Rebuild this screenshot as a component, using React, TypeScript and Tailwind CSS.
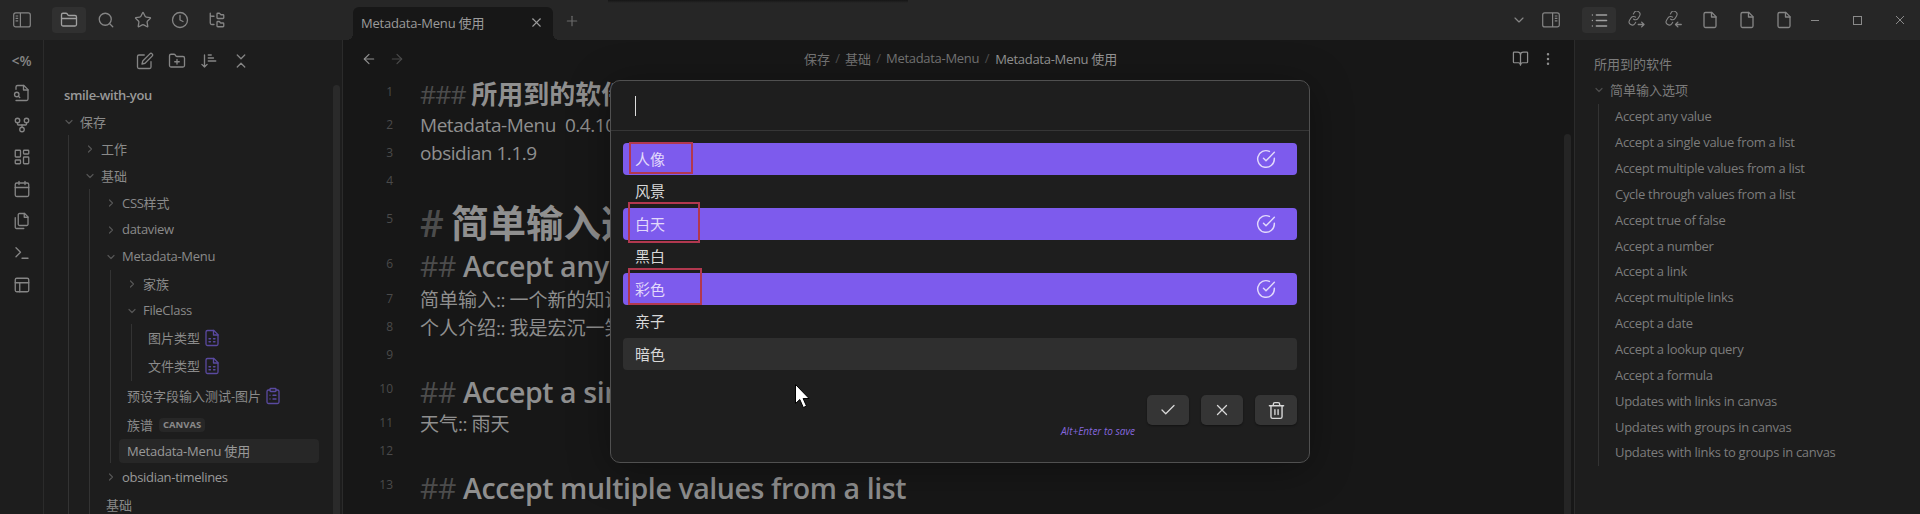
import React from "react";
import {
  ArrowLeft, ArrowRight, BookOpen, Calendar, Check, ChevronDown, ChevronRight, Clock, LayoutDashboard,
  List, MoreVertical, Plus, Search, Star, X, GitFork, Terminal,
} from "lucide-react";

type IconProps = { size?: number; className?: string; sw?: number; children?: React.ReactNode };

function Svg({ size = 18, className = "", sw = 1.75, children }: IconProps) {
  return (
    <svg width={size} height={size} viewBox="0 0 24 24" fill="none" stroke="currentColor" strokeWidth={sw}
      strokeLinecap="round" strokeLinejoin="round" className={"shrink-0 " + className}>
      {children}
    </svg>
  );
}

const FilePath = () => (
  <>
    <path d="M14.5 2H6a2 2 0 0 0-2 2v16a2 2 0 0 0 2 2h12a2 2 0 0 0 2-2V7.5L14.5 2z" />
    <path d="M14 2v6h6" />
  </>
);
const FileIcon = (p: IconProps) => <Svg {...p}><FilePath /></Svg>;
const FileTable = (p: IconProps) => (
  <Svg {...p}><FilePath /><path d="M8 13h2M8 17h2M14 13h2M14 17h2" /></Svg>
);
const ClipboardIcon = (p: IconProps) => (
  <Svg {...p}>
    <path d="M16 4h2a2 2 0 0 1 2 2v14a2 2 0 0 1-2 2H6a2 2 0 0 1-2-2V6a2 2 0 0 1 2-2h2" />
    <rect x="8" y="2" width="8" height="4" rx="1" />
    <path d="M12 11h4M12 16h4M8 11h.01M8 16h.01" />
  </Svg>
);
const FileSearchIcon = (p: IconProps) => (
  <Svg {...p}>
    <path d="M4 22h14a2 2 0 0 0 2-2V7.5L14.5 2H6a2 2 0 0 0-2 2v3" />
    <path d="M14 2v6h6" />
    <path d="M5 17a3 3 0 1 0 0-6 3 3 0 0 0 0 6zM9 18l-1.5-1.5" />
  </Svg>
);
const FilesIcon = (p: IconProps) => (
  <Svg {...p}>
    <path d="M15.5 2H8.6c-.4 0-.8.2-1.1.5-.3.3-.5.7-.5 1.1v12.8c0 .4.2.8.5 1.1.3.3.7.5 1.1.5h9.8c.4 0 .8-.2 1.1-.5.3-.3.5-.7.5-1.1V6.5L15.5 2z" />
    <path d="M3 7.6v12.8c0 .4.2.8.5 1.1.3.3.7.5 1.1.5h9.8" />
    <path d="M15 2v5h5" />
  </Svg>
);
const LayoutIcon = (p: IconProps) => (
  <Svg {...p}><rect x="3" y="3" width="18" height="18" rx="2" /><path d="M3 9h18M9 21V9" /></Svg>
);
const FolderIcon = (p: IconProps) => (
  <Svg {...p}>
    <path d="M4 20h16a2 2 0 0 0 2-2V8a2 2 0 0 0-2-2h-7.93a2 2 0 0 1-1.66-.9l-.82-1.2A2 2 0 0 0 7.93 3H4a2 2 0 0 0-2 2v13c0 1.1.9 2 2 2zM2 10h20" />
  </Svg>
);
const FolderPlusIcon = (p: IconProps) => (
  <Svg {...p}>
    <path d="M4 20h16a2 2 0 0 0 2-2V8a2 2 0 0 0-2-2h-7.93a2 2 0 0 1-1.66-.9l-.82-1.2A2 2 0 0 0 7.93 3H4a2 2 0 0 0-2 2v13c0 1.1.9 2 2 2zM12 10v6M9 13h6" />
  </Svg>
);
const FolderTreeIcon = (p: IconProps) => (
  <Svg {...p}>
    <path d="M13 10h7a1 1 0 0 0 1-1V6a1 1 0 0 0-1-1h-2.5a1 1 0 0 1-.8-.4l-.9-1.2A1 1 0 0 0 15 3h-2a1 1 0 0 0-1 1v5a1 1 0 0 0 1 1ZM13 21h7a1 1 0 0 0 1-1v-3a1 1 0 0 0-1-1h-2.88a1 1 0 0 1-.9-.55l-.44-.9a1 1 0 0 0-.9-.55H13a1 1 0 0 0-1 1v5a1 1 0 0 0 1 1ZM3 3v2c0 1.1.9 2 2 2h3M3 3v13c0 1.1.9 2 2 2h3" />
  </Svg>
);
const EditIcon = (p: IconProps) => (
  <Svg {...p}>
    <path d="M11 4H4a2 2 0 0 0-2 2v14a2 2 0 0 0 2 2h14a2 2 0 0 0 2-2v-7" />
    <path d="M18.5 2.5a2.12 2.12 0 0 1 3 3L12 15l-4 1 1-4Z" />
  </Svg>
);
const SortIcon = (p: IconProps) => (
  <Svg {...p}><path d="M2.5 16.5 6 20l3.5-3.5M6 20V4M11 4h4M11 8h7M11 12h10" /></Svg>
);
const CollapseIcon = (p: IconProps) => (
  <Svg {...p}><path d="m7 20 5-5 5 5M7 4l5 5 5-5" /></Svg>
);
const CheckCircle = (p: IconProps) => (
  <Svg {...p}><path d="M22 11.08V12a10 10 0 1 1-5.93-9.14M22 4 12 14.01l-3-3" /></Svg>
);
const TrashIcon = (p: IconProps) => (
  <Svg {...p}>
    <path d="M3 6h18M19 6v14a2 2 0 0 1-2 2H7a2 2 0 0 1-2-2V6M8 6V4a2 2 0 0 1 2-2h4a2 2 0 0 1 2 2v2M10 11v6M14 11v6" />
  </Svg>
);
const ChainPath = () => (
  <g transform="translate(0 -.6) scale(.84) rotate(-14 12 12)">
    <path d="M10 13a5 5 0 0 0 7.54.54l3-3a5 5 0 0 0-7.07-7.07l-1.72 1.71" />
    <path d="M14 11a5 5 0 0 0-7.54-.54l-3 3a5 5 0 0 0 7.07 7.07l1.71-1.71" />
  </g>
);
const LinkOut = (p: IconProps) => <Svg {...p}><ChainPath /><path d="M15 18h7.5M19.5 14.8l3.2 3.2-3.2 3.2" /></Svg>;
const LinkIn = (p: IconProps) => <Svg {...p}><ChainPath /><path d="M15.5 18H23M18.5 14.8 15.3 18l3.2 3.2" /></Svg>;

function PanelIcon({ right = false }: { right?: boolean }) {
  return (
    <svg width="18" height="16" viewBox="0 0 18 16" fill="none" stroke="currentColor" strokeWidth="1.2"
      className={right ? "-scale-x-100" : ""}>
      <rect x=".7" y=".9" width="16.6" height="14" rx="2" />
      <path d="M7.4 1v14M2.6 4h2.6M2.6 6.4h2.6M2.6 8.8h2.6" />
    </svg>
  );
}

const cjk = "font-['Noto_Sans_CJK_SC',sans-serif]";

/* Splits mixed text so that Latin runs keep their own tracking. */
function Mixed({ text, track = "tracking-[-0.3px]" }: { text: string; track?: string }) {
  return (
    <>
      {text.split(/([\u3000-\u9fff]+)/).filter(Boolean).map((part, i) =>
        /[\u3000-\u9fff]/.test(part)
          ? <span key={i} className={cjk}>{part}</span>
          : <span key={i} className={track}>{part}</span>
      )}
    </>
  );
}

function FolderRow({ name, open = false, root = false, className = "h-[27px]" }: { name: string; open?: boolean; root?: boolean; className?: string }) {
  const Icon = open ? ChevronDown : ChevronRight;
  return (
    <div className={"flex shrink-0 items-center gap-[5px] whitespace-pre " + (root ? "pl-[19px] " : "pl-[15px] ") + className}>
      <Icon size={12} strokeWidth={2.4} className="shrink-0 text-[#555]" />
      <span><Mixed text={name} /></span>
    </div>
  );
}

function FileRow({ name, className = "h-[30px]", children }: { name: string; className?: string; children?: React.ReactNode }) {
  return (
    <div className={"flex items-center gap-[3px] whitespace-pre pl-4 " + className}>
      <span><Mixed text={name} /></span>
      {children}
    </div>
  );
}

const guide = "ml-5 border-l border-[#333]";

function Explorer() {
  return (
    <aside className="flex w-[299px] shrink-0 border-r border-[#2b2b2b] bg-[#1d1d1d] text-[13px] text-[#8a8a8a]">
      <div className="flex min-w-0 flex-1 flex-col">
        <div className="flex h-[42px] shrink-0 items-center gap-[14px] pl-[92px] text-[#858585]">
          <EditIcon /><FolderPlusIcon /><SortIcon /><CollapseIcon />
        </div>
        <div className="flex h-[26px] shrink-0 items-center pl-5 font-semibold tracking-[-0.33px] text-[#999]">smile-with-you</div>
        <FolderRow name="保存" open root />
        <div className="ml-6 shrink-0 border-l border-[#333]">
          <FolderRow name="工作" />
          <FolderRow name="基础" open />
          <div className={guide}>
            <FolderRow name="CSS样式" />
            <FolderRow name="dataview" />
            <FolderRow name="Metadata-Menu" open />
            <div className={guide}>
              <FolderRow name="家族" />
              <FolderRow name="FileClass" open />
              <div className={guide}>
                <FileRow name="图片类型" className="h-[27px]"><FileTable className="text-[#5a4aa0]" /></FileRow>
                <FileRow name="文件类型"><FileTable className="text-[#5a4aa0]" /></FileRow>
              </div>
              <FileRow name="预设字段输入测试-图片"><ClipboardIcon className="text-[#5a4aa0]" /></FileRow>
              <FileRow name="族谱" className="h-7">
                <span className="ml-[3px] flex h-[14px] items-center rounded bg-[#272727] px-1 text-[9.5px] font-bold">CANVAS</span>
              </FileRow>
              <div className="ml-2 flex h-6 w-[200px] items-center rounded bg-[#272727] pl-2 whitespace-pre text-[#999]">
                <span><Mixed text="Metadata-Menu 使用" track="tracking-[-0.22px]" /></span>
              </div>
            </div>
            <FolderRow name="obsidian-timelines" className="h-7 text-[#999]" />
            <FileRow name="基础" className="h-[27px]" />
          </div>
        </div>
      </div>
      <div className="mt-[45px] mr-[2px] w-[7px] shrink-0 rounded-t bg-[#2a2a2a]" />
    </aside>
  );
}

function Ribbon() {
  return (
    <nav className="flex w-11 shrink-0 flex-col items-center gap-[14px] border-r border-[#2b2b2b] bg-[#1d1d1d] pt-3 text-[#858585]">
      <span className="flex h-[18px] items-center text-[14px] font-semibold">&lt;%</span>
      <FileSearchIcon />
      <GitFork size={18} strokeWidth={1.75} />
      <LayoutDashboard size={18} strokeWidth={1.75} />
      <Calendar size={18} strokeWidth={1.75} />
      <FilesIcon />
      <Terminal size={18} strokeWidth={1.75} />
      <LayoutIcon />
    </nav>
  );
}

function TitleBar() {
  return (
    <header className="flex h-10 shrink-0 items-center bg-[#262626] text-[#858585]">
      <div className="flex w-[343px] shrink-0 items-center pl-[13px]">
        <PanelIcon />
        <div className="ml-[21px] flex h-[26px] w-[34px] items-center justify-center rounded bg-[#303030] text-[#a0a0a0]">
          <FolderIcon />
        </div>
        <div className="ml-[11px] flex items-center gap-[19px]">
          <Search size={18} strokeWidth={1.75} />
          <Star size={18} strokeWidth={1.75} />
          <Clock size={18} strokeWidth={1.75} />
          <FolderTreeIcon />
        </div>
      </div>
      <div className="flex h-10 flex-1 items-end pl-[10px]">
        <div className="relative flex h-[33px] w-[200px] items-center rounded-t-md bg-[#171717] pr-[9px] pb-[2px] pl-[8px] text-[13px] text-[#9b9b9b]">
          <i className="absolute bottom-0 -left-[6px] size-[6px] bg-[radial-gradient(circle_at_0_0,transparent_6px,#171717_6px)]" />
          <i className="absolute -right-[6px] bottom-0 size-[6px] bg-[radial-gradient(circle_at_100%_0,transparent_6px,#171717_6px)]" />
          <span className="flex-1 whitespace-pre"><Mixed text="Metadata-Menu 使用" track="tracking-[-0.2px]" /></span>
          <X size={15} strokeWidth={1.75} />
        </div>
        <Plus size={16} strokeWidth={1.75} className="mb-[11px] ml-[11px] text-[#6b6b6b]" />
      </div>
      <ChevronDown size={16} strokeWidth={1.75} />
      <div className="ml-[15px]"><PanelIcon right /></div>
      <div className="ml-[22px] flex h-[26px] w-[34px] items-center justify-center rounded bg-[#303030] text-[#a0a0a0]">
        <List size={19} strokeWidth={1.75} />
      </div>
      <div className="ml-[11px] flex items-center gap-[19px]">
        <LinkOut /><LinkIn /><FileIcon /><FileIcon /><FileIcon />
      </div>
      <div className="mr-[15px] ml-[18px] flex items-center text-[#8a8a8a]">
        <div className="h-px w-2 bg-[#8a8a8a]" />
        <div className="ml-[34px] size-[9px] border border-[#8a8a8a]" />
        <svg width="10" height="10" viewBox="0 0 10 10" stroke="currentColor" className="ml-[33px]"><path d="M1 1l8 8M9 1L1 9" /></svg>
      </div>
    </header>
  );
}

type LineProps = { n: number; h: string; numPad?: string; children?: React.ReactNode };
function Line({ n, h, numPad = "", children }: LineProps) {
  return (
    <div className={"flex shrink-0 items-center " + h}>
      <span className={"w-[50px] shrink-0 text-right text-[12px] text-[#4a4a4a] " + numPad}>{n}</span>
      <div className="ml-[27px] whitespace-pre">{children}</div>
    </div>
  );
}

const h2 = "text-[28.5px] font-semibold tracking-[-0.41px]";
const hash = "text-[#4c4c4c]";

function Editor() {
  const body = "tracking-[-0.45px]";
  return (
    <main className="flex min-w-0 flex-1 bg-[#171717] text-[#8f8f8f]">
      <div className="flex min-w-0 flex-1 flex-col">
        <div className="flex h-[37px] shrink-0 items-center text-[13px]">
          <div className="flex w-[461px] items-center gap-3 pl-[18px]">
            <ArrowLeft size={16} strokeWidth={1.75} />
            <ArrowRight size={16} strokeWidth={1.75} className="text-[#4a4a4a]" />
          </div>
          <div className="flex items-center whitespace-pre text-[#747474]">
            <span className={cjk}>保存</span><span className="w-[15px] text-center text-[#505050]">/</span>
            <span className={cjk}>基础</span><span className="w-[15px] text-center text-[#505050]">/</span>
            <span className="tracking-[-0.3px]">Metadata-Menu</span><span className="w-4 text-center text-[#505050]">/</span>
            <span className="text-[#949494]"><Mixed text="Metadata-Menu 使用" /></span>
          </div>
          <div className="ml-auto flex items-center gap-[11px] pr-[8px]">
            <BookOpen size={17} strokeWidth={1.75} />
            <MoreVertical size={16} strokeWidth={1.75} />
          </div>
        </div>
        <div className="flex flex-col text-[19px]">
          <Line n={1} h="h-[34px]" numPad="pb-1">
            <div className="pb-[2px]">
              <span className={"text-[25px] tracking-[-0.9px] " + hash}>### </span>
              <span className={"text-[26px] font-bold " + cjk}>所用到的软件</span>
            </div>
          </Line>
          <Line n={2} h="h-7"><span className={body}>Metadata-Menu  0.4.10</span></Line>
          <Line n={3} h="h-7"><span className={body}>obsidian 1.1.9</span></Line>
          <Line n={4} h="h-7" />
          <Line n={5} h="h-[53px]" numPad="pb-[6px]">
            <span className={"text-[37px] font-semibold tracking-[-1.2px] " + hash}># </span>
            <span className={"text-[37.5px] font-bold " + cjk}>简单输入选项</span>
          </Line>
          <Line n={6} h="h-[37px]" numPad="pb-[6px]"><span className={h2}><span className={"font-normal " + hash}>## </span>Accept any value</span></Line>
          <Line n={7} h="h-7"><Mixed text="简单输入:: 一个新的知识" track={body} /></Line>
          <Line n={8} h="h-7"><Mixed text="个人介绍:: 我是宏沉一笑" track={body} /></Line>
          <Line n={9} h="h-7" />
          <Line n={10} h="h-10 pt-[6px]" numPad="pb-[6px]"><span className={h2}><span className={"font-normal " + hash}>## </span>Accept a single value from a list</span></Line>
          <Line n={11} h="h-7"><Mixed text="天气:: 雨天" track={body} /></Line>
          <Line n={12} h="h-7" />
          <Line n={13} h="h-[46px]" numPad="pb-[6px]"><span className={h2}><span className={"font-normal " + hash}>## </span>Accept multiple values from a list</span></Line>
        </div>
      </div>
      <div className="mt-[94px] mr-[3px] w-[7px] shrink-0 rounded-t bg-[#252525]" />
    </main>
  );
}

const headings = [
  "Accept any value", "Accept a single value from a list", "Accept multiple values from a list",
  "Cycle through values from a list", "Accept true of false", "Accept a number", "Accept a link",
  "Accept multiple links", "Accept a date", "Accept a lookup query", "Accept a formula",
  "Updates with links in canvas", "Updates with groups in canvas", "Updates with links to groups in canvas",
];

function Outline() {
  return (
    <aside className="w-[346px] shrink-0 border-l border-[#2b2b2b] bg-[#1d1d1d] pt-[11px] pl-[19px] text-[13px] text-[#7c7c7c]">
      <div className={"flex h-[26px] items-center pb-px " + cjk}>所用到的软件</div>
      <div className={"flex h-[27px] items-center gap-[5px] pb-[2px] " + cjk}>
        <ChevronDown size={12} strokeWidth={2.4} className="-ml-px text-[#4d4d4d]" />简单输入选项
      </div>
      <div className="ml-1 border-l border-[#333] pl-4">
        {headings.map((h) => (
          <div key={h} className="flex h-[25.85px] items-center whitespace-nowrap tracking-[-0.3px]">{h}</div>
        ))}
      </div>
    </aside>
  );
}

const options = [
  { name: "人像", on: true, mark: "left-[6px] -top-px h-8 w-16" },
  { name: "风景" },
  { name: "白天", on: true, mark: "left-[5px] -top-[6px] h-[41px] w-[72px]" },
  { name: "黑白" },
  { name: "彩色", on: true, mark: "left-[5px] -top-[5px] h-[37px] w-[74px]" },
  { name: "亲子" },
  { name: "暗色", hover: true },
];

function ActionButton({ children }: { children: React.ReactNode }) {
  return (
    <button className="flex h-[30px] w-[42px] items-center justify-center rounded-[5px] bg-[#353535] text-[#d8d8d8] shadow-[0_1px_2px_rgba(0,0,0,0.4)]">
      {children}
    </button>
  );
}

function ValueModal() {
  return (
    <div className="absolute top-20 left-[610px] flex h-[383px] w-[700px] flex-col rounded-[10px] border border-[#505050] bg-[#1e1e1e] text-[#d8d8d8] shadow-[0_6px_40px_rgba(0,0,0,0.35)]">
      <div className="flex h-[50px] items-center border-b border-[#363636] pl-6">
        <div className="h-5 w-px bg-[#dcdcdc]" />
      </div>
      <div className="flex flex-col gap-[0.5px] px-3 pt-3">
        {options.map((o) => (
          <div key={o.name} className={"relative flex h-8 items-center justify-between rounded pr-[21px] pl-3 text-[15px] " + cjk + (o.on ? " bg-[#7d5bed] text-[#e2d9fb]" : o.hover ? " bg-[#2f2f2f]" : "")}>
            <span className="pb-[2px]">{o.name}</span>
            {o.on && <CheckCircle size={20} />}
            {o.mark && <i className={"absolute border-2 border-[#b2384f] " + o.mark} />}
          </div>
        ))}
      </div>
      <div className="mt-[25px] flex items-start justify-end gap-3 pr-3">
        <span className="mt-[29px] text-[10px] leading-[14px] text-[#8467dd] italic">Alt+Enter to save</span>
        <ActionButton><Check size={18} strokeWidth={1.75} /></ActionButton>
        <ActionButton><X size={18} strokeWidth={1.75} /></ActionButton>
        <ActionButton><TrashIcon size={19} /></ActionButton>
      </div>
    </div>
  );
}

function Pointer() {
  return (
    <svg width="17" height="26" viewBox="0 0 17 26" className="absolute top-[383px] left-[794px]">
      <path d="M1.5 1.5v19l4.3-4 3.5 8 3.2-1.4-3.4-7.6h6z" fill="#fff" stroke="#000" strokeWidth="1" />
    </svg>
  );
}

export default function App() {
  return (
    <div className="relative flex h-[514px] w-[1920px] flex-col overflow-hidden bg-[#171717] font-['Open_Sans','Noto_Sans_CJK_SC',sans-serif] leading-none">
      <TitleBar />
      <div className="flex min-h-0 flex-1 overflow-hidden">
        <Ribbon />
        <Explorer />
        <Editor />
        <Outline />
      </div>
      <div className="absolute top-0 left-[608px] h-[3px] w-[300px] bg-linear-to-b from-[#161616] to-transparent" />
      <ValueModal />
      <Pointer />
    </div>
  );
}
